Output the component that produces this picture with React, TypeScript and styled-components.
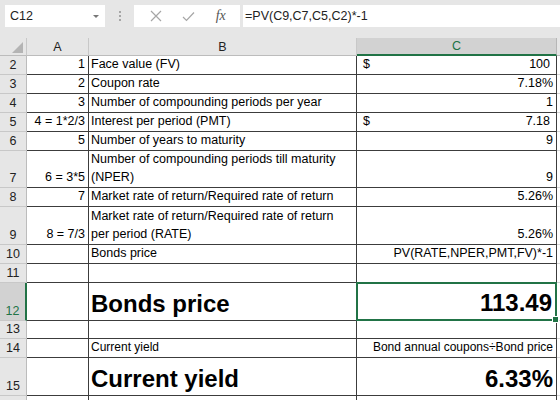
import styled, { createGlobalStyle } from 'styled-components';

const GlobalStyle = createGlobalStyle`
  html, body {
    margin: 0;
    padding: 0;
    background: #ffffff;
    overflow: hidden;
  }
  body {
    font-family: "Liberation Sans", Arial, sans-serif;
  }
`;

const Window = styled.div`
  width: 560px;
  height: 400px;
  overflow: hidden;
  background: #e6e6e6;
  display: flex;
  flex-direction: column;
`;

const FormulaBar = styled.div`
  height: 38px;
  flex-shrink: 0;
  display: flex;
  align-items: flex-start;
  padding: 5px 0 0 5px;
  box-sizing: border-box;
`;

const NameBox = styled.div`
  width: 100px;
  height: 22px;
  background: #fff;
  display: flex;
  align-items: center;
  justify-content: space-between;
  padding: 0 6px 0 5px;
  box-sizing: border-box;
  font-size: 12.5px;
  color: #222;
`;

const DropArrow = styled.span`
  width: 0;
  height: 0;
  border-left: 3px solid transparent;
  border-right: 3px solid transparent;
  border-top: 3px solid #777;
`;

const Grip = styled.div`
  width: 29px;
  height: 22px;
  display: flex;
  flex-direction: column;
  align-items: center;
  justify-content: center;
  gap: 2px;
`;

const Dot = styled.span`
  width: 2px;
  height: 2px;
  background: #a6a6a6;
`;

const ButtonGroup = styled.div`
  width: 106px;
  height: 22px;
  background: #fff;
  display: flex;
  align-items: center;
  justify-content: space-around;
  padding: 0 4px 0 6px;
  box-sizing: border-box;
`;

const Fx = styled.span`
  font-family: "Liberation Serif", "Times New Roman", serif;
  font-style: italic;
  font-size: 14px;
  color: #555;
`;

const FormulaInput = styled.div`
  flex: 1;
  height: 22px;
  margin-left: 3px;
  background: #fff;
  display: flex;
  align-items: center;
  padding-left: 2px;
  font-size: 12.5px;
  color: #222;
`;

const Sheet = styled.div`
  flex-shrink: 0;
  display: grid;
  grid-template-columns: 27px 62px 268px 200px 20px;
  background: #fff;
`;

const ColHeader = styled.div<{ $active?: boolean }>`
  height: 18px;
  box-sizing: border-box;
  background: ${(p) => (p.$active ? '#d2d2d2' : '#e6e6e6')};
  color: ${(p) => (p.$active ? '#217346' : '#222')};
  border-right: 1px solid ${(p) => (p.$active ? '#b6b6b6' : '#c8c8c8')};
  border-bottom: ${(p) => (p.$active ? '2px solid #217346' : '1px solid #bcbcbc')};
  display: flex;
  align-items: center;
  justify-content: center;
  font-size: 12.5px;
`;

const Corner = styled.div`
  height: 18px;
  box-sizing: border-box;
  background: #e6e6e6;
  border-right: 1px solid #c8c8c8;
  border-bottom: 1px solid #bcbcbc;
  display: flex;
  align-items: flex-end;
  justify-content: flex-end;
  padding: 0 3px 2px 0;
`;

const Triangle = styled.span`
  width: 0;
  height: 0;
  border-left: 11px solid transparent;
  border-bottom: 11px solid #b4b4b4;
`;

const RowHeader = styled.div<{ $h: number; $active?: boolean }>`
  height: ${(p) => p.$h}px;
  box-sizing: border-box;
  background: ${(p) => (p.$active ? '#d2d2d2' : '#e6e6e6')};
  color: ${(p) => (p.$active ? '#217346' : '#222')};
  border-right: ${(p) => (p.$active ? '2px solid #217346' : '1px solid #bcbcbc')};
  border-bottom: 1px solid #c8c8c8;
  display: flex;
  align-items: flex-end;
  justify-content: center;
  padding-bottom: 1px;
  font-size: 12.5px;
  line-height: 16px;
`;

const Cell = styled.div<{
  $h: number;
  $align?: 'left' | 'right';
  $big?: boolean;
  $small?: boolean;
}>`
  height: ${(p) => p.$h}px;
  box-sizing: border-box;
  border-right: 1px solid #3c3c3c;
  border-bottom: 1px solid #3c3c3c;
  display: flex;
  align-items: flex-end;
  justify-content: ${(p) => (p.$align === 'right' ? 'flex-end' : 'flex-start')};
  text-align: ${(p) => p.$align ?? 'left'};
  padding: 0 3px 1px 2px;
  color: #000;
  font-size: ${(p) => (p.$big ? '24px' : p.$small ? '12px' : '12.5px')};
  font-weight: ${(p) => (p.$big ? 700 : 400)};
  line-height: ${(p) => (p.$big ? '30px' : '18px')};
  white-space: nowrap;
  overflow: hidden;
`;

const Wrap = styled.span`
  white-space: normal;
`;

const Selected = styled(Cell)`
  position: relative;
  overflow: visible;
  border: 2px solid #217346;
  margin: -1px 0 0 -1px;
  height: ${(p) => p.$h + 1}px;
  width: calc(100% + 1px);
  padding-right: 3px;
`;

const FillHandle = styled.span`
  position: absolute;
  right: -4px;
  bottom: -4px;
  width: 5px;
  height: 5px;
  background: #217346;
  border: 1px solid #fff;
`;

const Accounting = styled.span`
  flex: 1;
  display: flex;
  justify-content: space-between;
  padding: 0 3px 0 4px;
`;

const Filler = styled.div<{ $h: number }>`
  height: ${(p) => p.$h}px;
  box-sizing: border-box;
  border-bottom: 1px solid #d4d4d4;
`;

type Row = {
  n: number;
  h: number;
  a?: string;
  b?: string;
  c?: string;
  money?: boolean;
  wrap?: boolean;
  big?: boolean;
  small?: boolean;
  selected?: boolean;
};

const rows: Row[] = [
  { n: 2, h: 19, a: '1', b: 'Face value (FV)', c: '100', money: true },
  { n: 3, h: 19, a: '2', b: 'Coupon rate', c: '7.18%' },
  { n: 4, h: 19, a: '3', b: 'Number of compounding periods per year', c: '1' },
  { n: 5, h: 19, a: '4 = 1*2/3', b: 'Interest per period (PMT)', c: '7.18', money: true },
  { n: 6, h: 19, a: '5', b: 'Number of years to maturity', c: '9' },
  { n: 7, h: 37, a: '6 = 3*5', b: 'Number of compounding periods  till maturity (NPER)', c: '9', wrap: true },
  { n: 8, h: 19, a: '7', b: 'Market rate of return/Required rate of return', c: '5.26%' },
  { n: 9, h: 38, a: '8 = 7/3', b: 'Market rate of return/Required rate of return per period (RATE)', c: '5.26%', wrap: true },
  { n: 10, h: 19, b: 'Bonds price', c: 'PV(RATE,NPER,PMT,FV)*-1' },
  { n: 11, h: 19 },
  { n: 12, h: 38, b: 'Bonds price', c: '113.49', big: true, selected: true },
  { n: 13, h: 18 },
  { n: 14, h: 19, b: 'Current yield', c: 'Bond annual coupons÷Bond price', small: true },
  { n: 15, h: 38, b: 'Current yield', c: '6.33%', big: true },
];

function CancelIcon() {
  return (
    <svg width="12" height="12" viewBox="0 0 12 12">
      <path d="M1 1 L11 11 M11 1 L1 11" stroke="#a6a6a6" strokeWidth="1.2" fill="none" />
    </svg>
  );
}

function CheckIcon() {
  return (
    <svg width="13" height="11" viewBox="0 0 13 11">
      <path d="M1 6 L4.5 9.5 L12 1.5" stroke="#a6a6a6" strokeWidth="1.2" fill="none" />
    </svg>
  );
}

function SheetRow({ row }: { row: Row }) {
  const { n, h, a, b, c, money, wrap, big, small, selected } = row;
  const value = money ? (
    <Accounting>
      <span>$</span>
      <span>{c}</span>
    </Accounting>
  ) : (
    c
  );
  return (
    <>
      <RowHeader $h={h} $active={selected}>
        {n}
      </RowHeader>
      <Cell $h={h} $align="right">
        {a}
      </Cell>
      <Cell $h={h} $big={big} $small={small}>
        {wrap ? <Wrap>{b}</Wrap> : b}
      </Cell>
      {selected ? (
        <Selected $h={h} $align="right" $big={big}>
          {value}
          <FillHandle />
        </Selected>
      ) : (
        <Cell $h={h} $align="right" $big={big} $small={small}>
          {value}
        </Cell>
      )}
      <Filler $h={h} />
    </>
  );
}

export default function App() {
  return (
    <>
      <GlobalStyle />
      <Window>
        <FormulaBar>
          <NameBox>
            C12
            <DropArrow />
          </NameBox>
          <Grip>
            <Dot />
            <Dot />
            <Dot />
          </Grip>
          <ButtonGroup>
            <CancelIcon />
            <CheckIcon />
            <Fx>fx</Fx>
          </ButtonGroup>
          <FormulaInput>=PV(C9,C7,C5,C2)*-1</FormulaInput>
        </FormulaBar>
        <Sheet>
          <Corner>
            <Triangle />
          </Corner>
          <ColHeader>A</ColHeader>
          <ColHeader>B</ColHeader>
          <ColHeader $active>C</ColHeader>
          <ColHeader />
          {rows.map((row) => (
            <SheetRow key={row.n} row={row} />
          ))}
          {/* next row only peeks in at the bottom edge */}
          <RowHeader $h={19} />
          <Cell $h={19} />
          <Cell $h={19} />
          <Cell $h={19} />
          <Filler $h={19} />
        </Sheet>
      </Window>
    </>
  );
}
